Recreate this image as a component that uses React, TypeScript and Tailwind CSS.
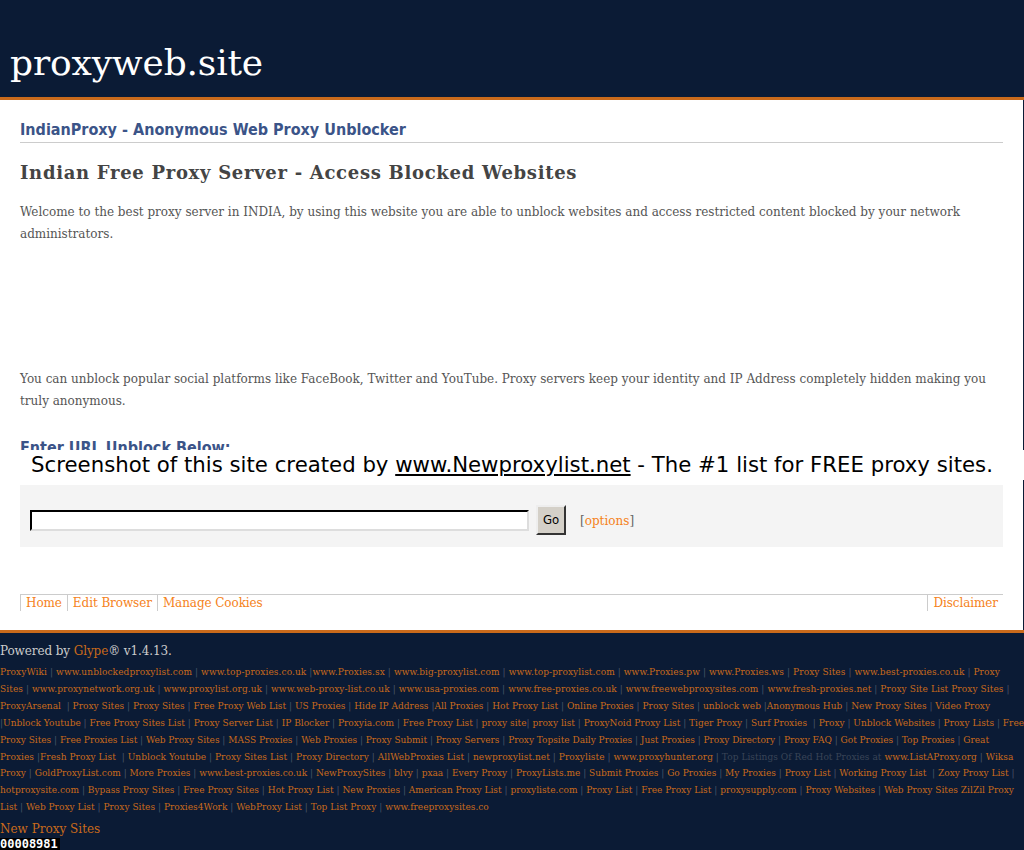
const serif = 'font-["DejaVu_Serif",serif]';
const pipe = 'text-[#4a5568]';

// footer link block, one entry per line as wrapped in the page.
// ~ = no space before the pipe, ^ = no space after the previous link's pipe
const linkLines: { items: string; tracking: string }[] = [
  { items: 'ProxyWiki|www.unblockedproxylist.com|www.top-proxies.co.uk|~www.Proxies.sx|www.big-proxylist.com|www.top-proxylist.com|www.Proxies.pw|www.Proxies.ws|Proxy Sites|www.best-proxies.co.uk|Proxy', tracking: 'tracking-[0.09px]' },
  { items: 'Sites|www.proxynetwork.org.uk|www.proxylist.org.uk|www.web-proxy-list.co.uk|www.usa-proxies.com|www.free-proxies.co.uk|www.freewebproxysites.com|www.fresh-proxies.net|Proxy Site List Proxy Sites|', tracking: 'tracking-[0.08px]' },
  { items: 'ProxyArsenal\u00a0|Proxy Sites|Proxy Sites|Free Proxy Web List|US Proxies|Hide IP Address|~All Proxies|Hot Proxy List|Online Proxies|Proxy Sites|unblock web|~Anonymous Hub|New Proxy Sites|Video Proxy', tracking: 'tracking-[0.016px]' },
  { items: '~|Unblock Youtube|Free Proxy Sites List|Proxy Server List|IP Blocker|Proxyia.com|Free Proxy List|proxy site^|proxy list|ProxyNoid Proxy List|Tiger Proxy|Surf Proxies\u00a0|Proxy|Unblock Websites|Proxy Lists|Free', tracking: 'tracking-[0px]' },
  { items: 'Proxy Sites|Free Proxies List|Web Proxy Sites|MASS Proxies|Web Proxies|Proxy Submit|Proxy Servers|Proxy Topsite Daily Proxies|Just Proxies|Proxy Directory|Proxy FAQ|Got Proxies|Top Proxies|Great', tracking: 'tracking-[-0.02px]' },
  { items: 'Proxies|~Fresh Proxy List\u00a0|Unblock Youtube|Proxy Sites List|Proxy Directory|AllWebProxies List|newproxylist.net|Proxyliste|www.proxyhunter.org|#Top Listings Of Red Hot Proxies at www.ListAProxy.org|Wiksa', tracking: 'tracking-[0.05px]' },
  { items: 'Proxy|GoldProxyList.com|More Proxies|www.best-proxies.co.uk|NewProxySites|blvy|pxaa|Every Proxy|ProxyLists.me|Submit Proxies|Go Proxies|My Proxies|Proxy List|Working Proxy List\u00a0|Zoxy Proxy List|', tracking: 'tracking-[0px]' },
  { items: 'hotproxysite.com|Bypass Proxy Sites|Free Proxy Sites|Hot Proxy List|New Proxies|American Proxy List|proxyliste.com|Proxy List|Free Proxy List|proxysupply.com|Proxy Websites|Web Proxy Sites ZilZil Proxy', tracking: 'tracking-[0.015px]' },
  { items: 'List|Web Proxy List|Proxy Sites|Proxies4Work|WebProxy List|Top List Proxy|www.freeproxysites.co', tracking: 'tracking-[0.02px]' },
];

function LinkItem({ raw }: { raw: string }) {
  if (raw.startsWith('#')) {
    const [dim, link] = raw.slice(1).split(' at ');
    return (
      <>
        <span className="text-[#3a4557]">{dim} at </span>
        <a href="#" className="text-[#c96a1b]">{link}</a>
      </>
    );
  }
  return <a href="#" className="text-[#c96a1b]">{raw.replace('~', '').replace('^', '')}</a>;
}

function LinkLine({ items, tracking }: { items: string; tracking: string }) {
  const parts = items.split('|');
  return (
    <div className={`whitespace-pre ${tracking}`}>
      {parts.map((raw, i) => (
        <span key={i}>
          {i > 0 && (
            <span className={pipe}>
              {parts[i - 1] === '~' ? '|' : parts[i - 1].endsWith('^') ? '| ' : raw.startsWith('~') ? ' |' : ' | '}
            </span>
          )}
          {raw !== '~' && raw !== '' && <LinkItem raw={raw} />}
        </span>
      ))}
    </div>
  );
}

export default function App() {
  return (
    <div className={`relative min-h-[850px] overflow-hidden bg-[#0b1b35] ${serif}`}>
      <header className="h-[100px] border-b-[3px] border-[#c96a1b] pl-[10px] pt-[38px]">
        <h1 className="text-[36px] leading-[50px] font-normal tracking-[-0.15px] text-white">proxyweb.site</h1>
      </header>

      <main className="mr-px h-[530px] bg-white px-5 pt-[19px]">
        <h2 className="h-[24px] border-b border-[#ccc] font-['DejaVu_Sans',sans-serif] text-[16px] leading-[21px] font-bold font-stretch-condensed text-[#3b5488]">
          IndianProxy - Anonymous Web Proxy Unblocker
        </h2>
        <h3 className="mt-[18px] text-[18px] leading-[24px] font-bold tracking-[0.7px] text-[#444]">
          Indian Free Proxy Server - Access Blocked Websites
        </h3>
        <p className="mt-[16px] text-[12px] leading-[22px] text-[#555]">
          Welcome to the best proxy server in INDIA, by using this website you are able to unblock websites and access restricted content blocked by your network administrators.
        </p>
        <p className="mt-[123px] text-[12px] leading-[22px] text-[#555]">
          You can unblock popular social platforms like FaceBook, Twitter and YouTube. Proxy servers keep your identity and IP Address completely hidden making you truly anonymous.
        </p>
        <h2 className="mt-[24px] h-[49px] font-['DejaVu_Sans',sans-serif] text-[16px] leading-[24px] font-bold font-stretch-condensed text-[#3b5488]">
          Enter URL Unblock Below:
        </h2>

        <div className="flex h-[62px] items-center bg-[#f4f4f4] pt-[8px] pl-[10px]">
          <input
            type="text"
            className="h-[21px] w-[499px] border-2 border-t-black border-l-black border-r-[#ddd] border-b-[#ddd] bg-white"
          />
          <button
            type="button"
            className="ml-[7px] h-[30px] w-[30px] border-2 border-t-[#eee] border-l-[#eee] border-r-[#333] border-b-[#333] bg-[#d4d0c8] font-['DejaVu_Sans',sans-serif] text-[13px] font-stretch-condensed text-black"
          >
            Go
          </button>
          <span className="ml-[14px] pt-px text-[12px] text-[#666]">
            [<a href="#" className="text-[#f58220]">options</a>]
          </span>
        </div>

        <nav className="mt-[47px] flex h-[16px] items-start justify-between border-t border-[#ccc] text-[12px] leading-[16px] tracking-[-0.08px] text-[#f58220]">
          <ul className="flex">
            <li className="border-l border-[#ccc] px-[5px]">Home</li>
            <li className="border-l border-[#ccc] px-[5px]">Edit Browser</li>
            <li className="border-l border-[#ccc] px-[5px]">Manage Cookies</li>
          </ul>
          <ul className="flex">
            <li className="border-l border-[#ccc] px-[5px]">Disclaimer</li>
          </ul>
        </nav>
      </main>

      <footer className="border-t-[3px] border-[#c96a1b] pt-[9px]">
        <p className="text-[12px] leading-[18px] tracking-[-0.1px] text-[#ccc]">
          Powered by <a href="#" className="text-[#c96a1b]">Glype</a>® v1.4.13.
        </p>
        <div className="mt-[4px] text-[9px] leading-[16.9px]">
          {linkLines.map((line) => (
            <LinkLine key={line.items} items={line.items} tracking={line.tracking} />
          ))}
        </div>
        <p className="mt-[5px] text-[12px] leading-[16px] text-[#c96a1b]">New Proxy Sites</p>
        <div className="mt-px w-[60px] bg-black font-['DejaVu_Sans_Mono',monospace] text-[12px] leading-[13px] font-bold text-white">
          00008981
        </div>
      </footer>

      <div className="absolute top-[450px] left-0 h-[30px] w-full bg-white text-center font-['DejaVu_Sans',sans-serif] text-[21.25px] leading-[30px] text-black">
        Screenshot of this site created by <a href="#" className="underline">www.Newproxylist.net</a> - The #1 list for FREE proxy sites.
      </div>
    </div>
  );
}
